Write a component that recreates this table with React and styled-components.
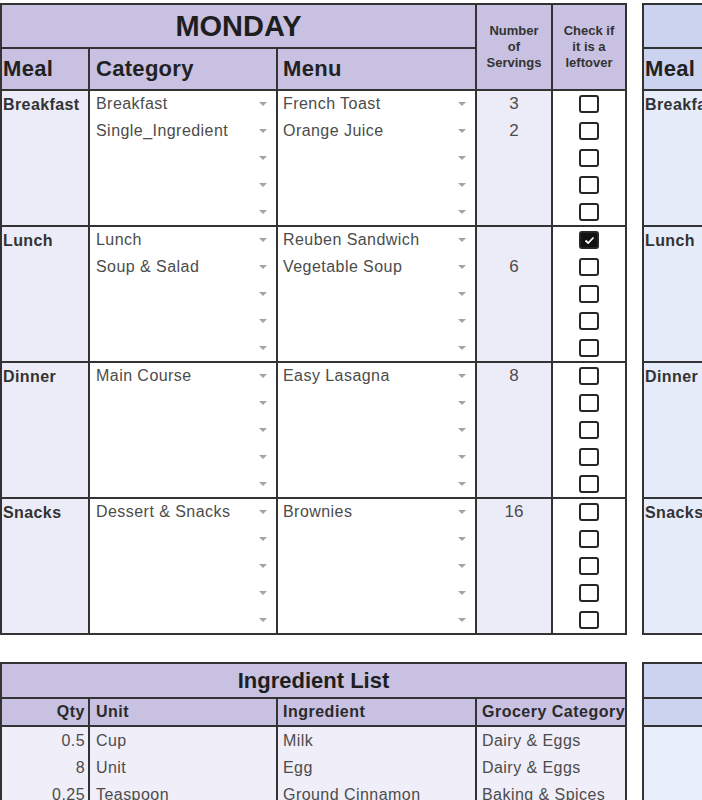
import React from 'react';
import styled, { createGlobalStyle } from 'styled-components';

const GlobalStyle = createGlobalStyle`
  body {
    margin: 0;
    background: #fff;
    font-family: "Liberation Sans", Arial, sans-serif;
    overflow: hidden;
  }
`;

const palettes = {
  purple: { head: '#c8c1e2', body: '#ecebf8', rows: '#efeef9' },
  blue: { head: '#ccd3ee', body: '#e6ecf9', rows: '#e8eefa' },
};

const Page = styled.div`
  display: flex;
  flex-direction: column;
  gap: 27px;
  padding-top: 3px;
  width: max-content;
`;

const Row = styled.div`
  display: flex;
  gap: 15px;
`;

const Planner = styled.div`
  display: grid;
  grid-template-columns: 88px 188px 199px 76px 74px;
  grid-template-rows: 44px 42px repeat(4, 136px);
  border-top: 2px solid #333;
  border-left: 2px solid #333;
`;

const Cell = styled.div`
  box-sizing: border-box;
  min-width: 0;
  overflow: hidden;
  border-right: 2px solid #333;
  border-bottom: 2px solid #333;
  background: ${p => p.$bg || '#fff'};
`;

const DayTitle = styled(Cell)`
  grid-row: 1;
  grid-column: 1 / 4;
  display: flex;
  align-items: center;
  justify-content: center;
  font-size: 29px;
  font-weight: bold;
  color: #1e1e1e;
`;

const ColumnHead = styled(Cell)`
  grid-row: 2;
  display: flex;
  align-items: center;
  padding-left: ${p => p.$pad || 0}px;
  font-size: 22px;
  font-weight: bold;
  letter-spacing: 0.3px;
  color: #222;
`;

const SideHead = styled(Cell)`
  grid-row: 1 / 3;
  grid-column: ${p => p.$col};
  display: flex;
  align-items: center;
  justify-content: center;
  text-align: center;
  font-size: 13px;
  font-weight: bold;
  line-height: 16px;
  color: #333;
`;

const Lines = styled(Cell)`
  display: grid;
  grid-template-rows: repeat(5, 1fr);
`;

const MealName = styled.div`
  height: 27px;
  line-height: 27px;
  padding-left: 1px;
  font-size: 16px;
  font-weight: bold;
  letter-spacing: 0.4px;
  color: #333;
`;

const Pick = styled.div`
  display: flex;
  align-items: center;
  padding: 0 9px 0 ${p => p.$pad}px;
  font-size: 16px;
  letter-spacing: 0.45px;
  color: #4c4c4c;
  white-space: nowrap;
`;

const Arrow = styled.span`
  flex: none;
  margin-left: auto;
  width: 0;
  height: 0;
  border-left: 4px solid transparent;
  border-right: 4px solid transparent;
  border-top: 4px solid #a3a3a3;
`;

const Count = styled.div`
  display: flex;
  align-items: center;
  justify-content: center;
  font-size: 17px;
  color: #4c4c4c;
`;

const BoxLine = styled.div`
  display: flex;
  align-items: center;
  justify-content: center;
`;

const Box = styled.span`
  box-sizing: border-box;
  width: 20px;
  height: 18px;
  border: 2.5px solid #262626;
  border-radius: 3px;
  background: ${p => (p.$on ? '#111' : '#fff')};
  display: flex;
  align-items: center;
  justify-content: center;
`;

const Ingredients = styled.div`
  display: grid;
  grid-template-columns: 88px 188px 199px 150px;
  grid-template-rows: 35px 28px;
  grid-auto-rows: 27px;
  border-top: 2px solid #333;
  border-left: 2px solid #333;
`;

const ListTitle = styled(Cell)`
  grid-column: 1 / -1;
  display: flex;
  align-items: center;
  justify-content: center;
  font-size: 22px;
  font-weight: bold;
  color: #1e1e1e;
`;

const ListHead = styled(Cell)`
  display: flex;
  align-items: center;
  justify-content: ${p => (p.$right ? 'flex-end' : 'flex-start')};
  padding: 0 3px 0 ${p => p.$pad || 0}px;
  font-size: 16px;
  font-weight: bold;
  letter-spacing: 0.5px;
  color: #2a2a2a;
  white-space: nowrap;
`;

const ListCell = styled(Cell)`
  border-bottom: none;
  display: flex;
  align-items: center;
  justify-content: ${p => (p.$right ? 'flex-end' : 'flex-start')};
  padding: 0 3px 0 ${p => p.$pad || 0}px;
  font-size: 16px;
  letter-spacing: 0.45px;
  color: #4c4c4c;
  white-space: nowrap;
`;

const blank = { cat: '', menu: '', serv: '' };
const fill = items => [...items, ...Array(5 - items.length).fill(blank)];

const monday = [
  {
    name: 'Breakfast',
    items: fill([
      { cat: 'Breakfast', menu: 'French Toast', serv: '3' },
      { cat: 'Single_Ingredient', menu: 'Orange Juice', serv: '2' },
    ]),
    checks: [false, false, false, false, false],
  },
  {
    name: 'Lunch',
    items: fill([
      { cat: 'Lunch', menu: 'Reuben Sandwich', serv: '' },
      { cat: 'Soup & Salad', menu: 'Vegetable Soup', serv: '6' },
    ]),
    checks: [true, false, false, false, false],
  },
  {
    name: 'Dinner',
    items: fill([{ cat: 'Main Course', menu: 'Easy Lasagna', serv: '8' }]),
    checks: [false, false, false, false, false],
  },
  {
    name: 'Snacks',
    items: fill([{ cat: 'Dessert & Snacks', menu: 'Brownies', serv: '16' }]),
    checks: [false, false, false, false, false],
  },
];

const tuesday = monday.map(m => ({
  name: m.name,
  items: fill([]),
  checks: [false, false, false, false, false],
}));

const mondayList = [
  { qty: '0.5', unit: 'Cup', name: 'Milk', group: 'Dairy & Eggs' },
  { qty: '8', unit: 'Unit', name: 'Egg', group: 'Dairy & Eggs' },
  { qty: '0.25', unit: 'Teaspoon', name: 'Ground Cinnamon', group: 'Baking & Spices' },
];

const Tick = () => (
  <svg width="11" height="9" viewBox="0 0 11 9">
    <polyline points="1.5,4.5 4.2,7 9.5,1.5" fill="none" stroke="#fff" strokeWidth="1.8" />
  </svg>
);

const DayPlanner = ({ day, meals, tone }) => {
  const c = palettes[tone];
  return (
    <Planner>
      <DayTitle $bg={c.head}>{day}</DayTitle>
      <SideHead $bg={c.head} $col={4}>Number<br />of<br />Servings</SideHead>
      <SideHead $bg={c.head} $col={5}>Check if<br />it is a<br />leftover</SideHead>
      <ColumnHead $bg={c.head} $pad={1}>Meal</ColumnHead>
      <ColumnHead $bg={c.head} $pad={6}>Category</ColumnHead>
      <ColumnHead $bg={c.head} $pad={5}>Menu</ColumnHead>
      {meals.map(meal => (
        <React.Fragment key={meal.name}>
          <Cell $bg={c.body}>
            <MealName>{meal.name}</MealName>
          </Cell>
          <Lines>
            {meal.items.map((it, i) => (
              <Pick key={i} $pad={6}>{it.cat}<Arrow /></Pick>
            ))}
          </Lines>
          <Lines>
            {meal.items.map((it, i) => (
              <Pick key={i} $pad={5}>{it.menu}<Arrow /></Pick>
            ))}
          </Lines>
          <Lines $bg={c.body}>
            {meal.items.map((it, i) => (
              <Count key={i}>{it.serv}</Count>
            ))}
          </Lines>
          <Lines>
            {meal.checks.map((on, i) => (
              <BoxLine key={i}>
                <Box $on={on}>{on && <Tick />}</Box>
              </BoxLine>
            ))}
          </Lines>
        </React.Fragment>
      ))}
    </Planner>
  );
};

const listHeads = ['Qty', 'Unit', 'Ingredient', 'Grocery Category'];

const IngredientList = ({ rows, tone, title, heads }) => {
  const c = palettes[tone];
  return (
    <Ingredients>
      <ListTitle $bg={c.head}>{title}</ListTitle>
      <ListHead $bg={c.head} $right>{heads[0]}</ListHead>
      <ListHead $bg={c.head} $pad={6}>{heads[1]}</ListHead>
      <ListHead $bg={c.head} $pad={5}>{heads[2]}</ListHead>
      <ListHead $bg={c.head} $pad={5}>{heads[3]}</ListHead>
      {rows.map((r, i) => (
        <React.Fragment key={i}>
          <ListCell $bg={c.rows} $right>{r.qty}</ListCell>
          <ListCell $bg={c.rows} $pad={6}>{r.unit}</ListCell>
          <ListCell $bg={c.rows} $pad={5}>{r.name}</ListCell>
          <ListCell $bg={c.rows} $pad={5}>{r.group}</ListCell>
        </React.Fragment>
      ))}
    </Ingredients>
  );
};

const emptyList = [1, 2, 3].map(() => ({ qty: '', unit: '', name: '', group: '' }));

export default function App() {
  return (
    <>
      <GlobalStyle />
      <Page>
        <Row>
          <DayPlanner day="MONDAY" meals={monday} tone="purple" />
          <DayPlanner day="TUESDAY" meals={tuesday} tone="blue" />
        </Row>
        <Row>
          <IngredientList rows={mondayList} tone="purple" title="Ingredient List" heads={listHeads} />
          <IngredientList rows={emptyList} tone="blue" title="" heads={['', '', '', '']} />
        </Row>
      </Page>
    </>
  );
}
